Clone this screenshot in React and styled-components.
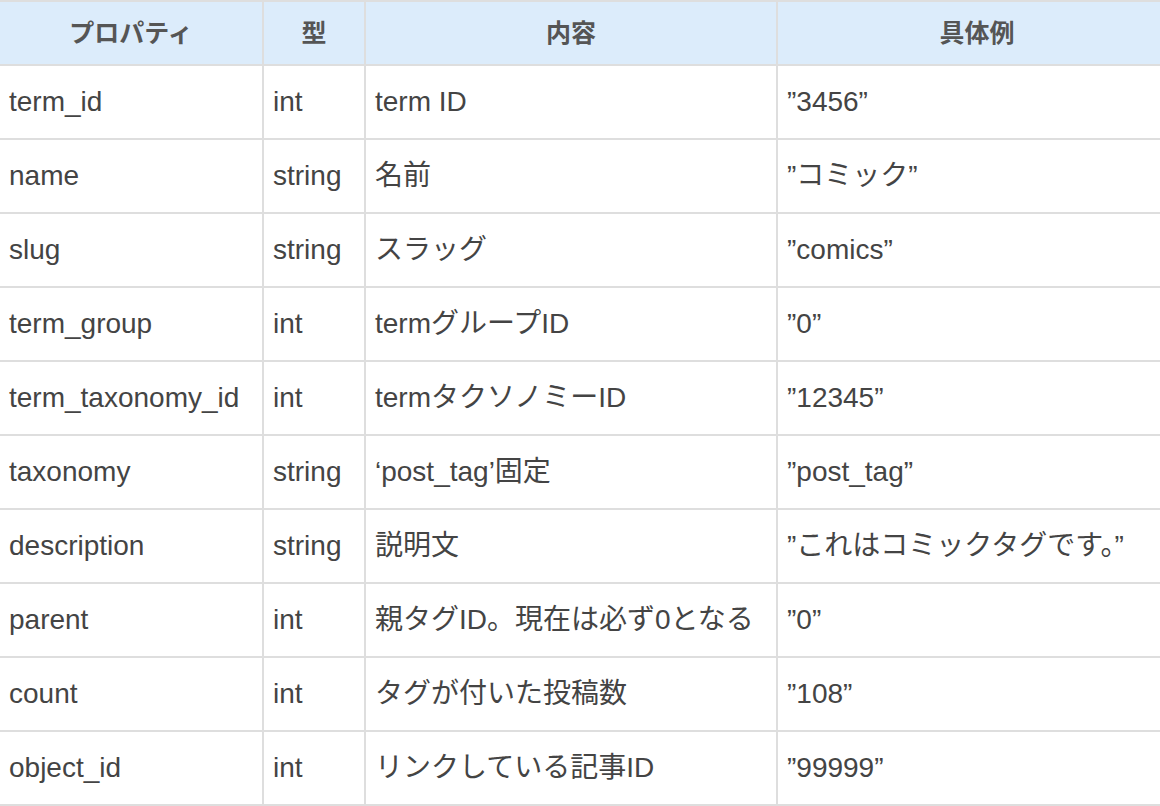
import styled, { createGlobalStyle } from "styled-components";

const Global = createGlobalStyle`
  body { margin: 0; background: #fff; overflow: hidden; }
`;

const widths = [264, 102, 412, 400];

const rows = [
  ["term_id", "int", "term ID", "”3456”"],
  ["name", "string", "名前", "”コミック”"],
  ["slug", "string", "スラッグ", "”comics”"],
  ["term_group", "int", "termグループID", "”0”"],
  ["term_taxonomy_id", "int", "termタクソノミーID", "”12345”"],
  ["taxonomy", "string", "‘post_tag’固定", "”post_tag”"],
  ["description", "string", "説明文", "”これはコミックタグです。”"],
  ["parent", "int", "親タグID。現在は必ず0となる", "”0”"],
  ["count", "int", "タグが付いた投稿数", "”108”"],
  ["object_id", "int", "リンクしている記事ID", "”99999”"],
];

const App = () => (
  <>
    <Global />
    <Table>
      <colgroup>
        {widths.map((w, i) => (
          <Col key={i} $w={w} />
        ))}
      </colgroup>
      <thead>
        <tr>
          <Th>プロパティ</Th>
          <Th>型</Th>
          <Th>内容</Th>
          <Th>具体例</Th>
        </tr>
      </thead>
      <tbody>
        {rows.map((r) => (
          <tr key={r[0]}>
            {r.map((c, i) => (
              <Td key={i}>{c}</Td>
            ))}
          </tr>
        ))}
      </tbody>
    </Table>
  </>
);

const Table = styled.table`
  border-collapse: collapse;
  table-layout: fixed;
  width: 1178px;
  margin-left: -2px;
  font-family: "Liberation Sans", "Noto Sans CJK JP", sans-serif;
  color: #444;
`;

const Col = styled.col`
  width: ${(p) => p.$w}px;
`;

const Th = styled.th`
  height: 62px;
  padding: 0;
  background: #dcecfb;
  border: 2px solid #dedede;
  font-size: 25px;
  font-weight: bold;
  color: #555;
  text-align: center;
  line-height: 30px;
`;

const Td = styled.td`
  height: 72px;
  padding: 0 9px;
  border: 2px solid #dedede;
  font-size: 28px;
  line-height: 34px;
  white-space: nowrap;
  overflow: hidden;
`;

export default App;
